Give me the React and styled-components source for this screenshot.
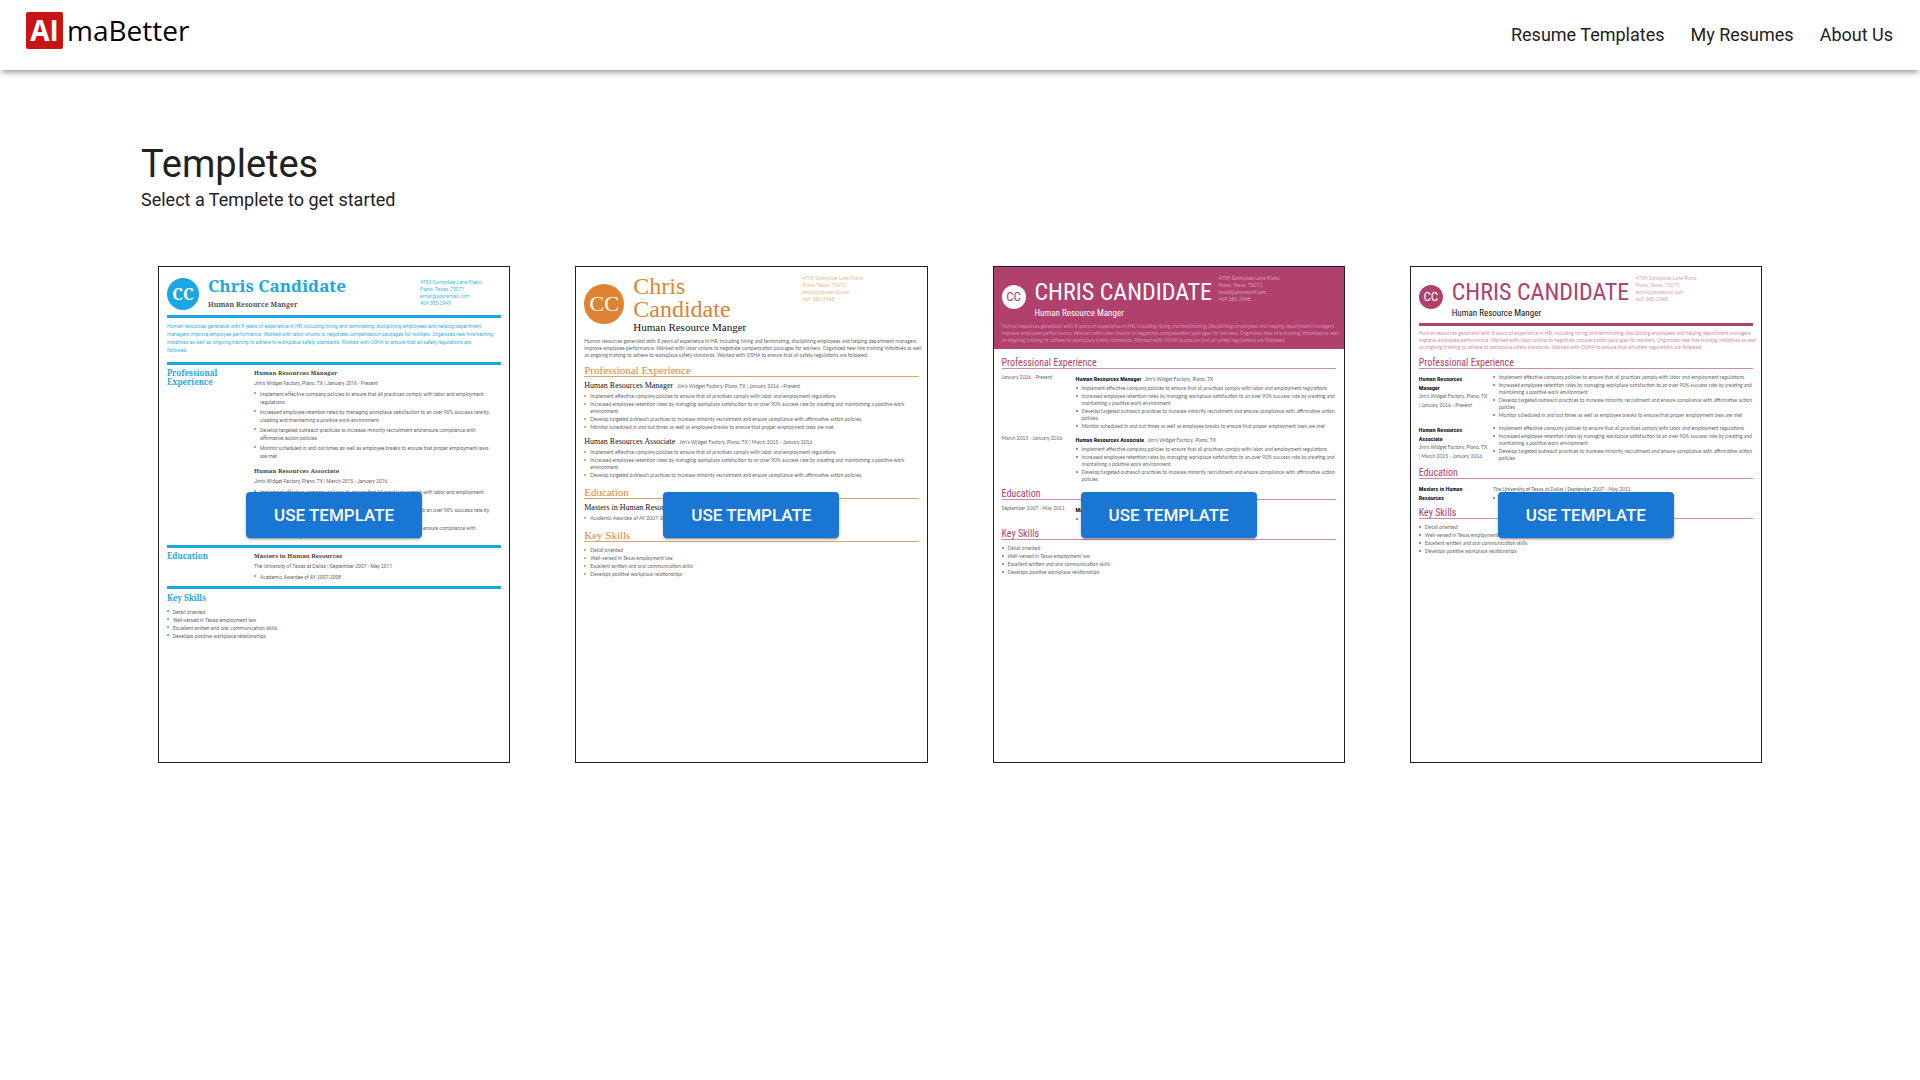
import React from "react";
import styled, { createGlobalStyle } from "styled-components";

const GlobalStyle = createGlobalStyle`
  * { box-sizing: border-box; }
  body { margin: 0; background: #fff; color: #212121; font-family: Roboto, sans-serif; }
  h1, h2, h3, h4, p, ul { margin: 0; padding: 0; font-weight: 400; }
`;

const serif = '"Noto Serif", "Liberation Serif", serif';
const baskerville = '"Liberation Serif", serif';
const narrow = '"Roboto Condensed", "Liberation Sans Narrow", Roboto, sans-serif';

const TopBar = styled.header`
  display: flex;
  justify-content: space-between;
  align-items: center;
  height: 70px;
  padding: 0 27px 0 26px;
  box-shadow: 0 4px 6px -2px rgba(0, 0, 0, 0.45);
`;

const Logo = styled.a`
  display: flex;
  align-items: center;
  gap: 4px;
  padding-bottom: 9px;
  color: #000;
  font: 400 28px/37px "Open Sans", sans-serif;
  text-decoration: none;
`;

const LogoMark = styled.span`
  width: 37px;
  height: 37px;
  border-radius: 2px;
  background: #c91416;
  color: #fff;
  font-weight: 700;
  text-align: center;
`;

const Nav = styled.nav`
  display: flex;
  gap: 26px;
`;

const NavLink = styled.a`
  color: #212121;
  font-size: 18px;
  line-height: 24px;
  text-decoration: none;
`;

const Page = styled.main`
  padding: 70px 141px;
`;

const Title = styled.h1`
  font-size: 38px;
  line-height: 48px;
`;

const Subtitle = styled.p`
  font-size: 18px;
  line-height: 24px;
`;

const Gallery = styled.section`
  display: grid;
  grid-template-columns: repeat(4, 1fr);
  gap: 65px;
  padding: 54px 17px 0;
`;

const Card = styled.article`
  position: relative;
  aspect-ratio: 352 / 497;
  overflow: hidden;
  border: 1px solid #212121;
`;

const UseButton = styled.button`
  position: absolute;
  top: 50%;
  left: 50%;
  transform: translate(-50%, -50%);
  width: 176px;
  height: 46px;
  border: 0;
  border-radius: 4px;
  background: #1976d2;
  color: #fff;
  font: 500 17px/24px Roboto, sans-serif;
  text-transform: uppercase;
  white-space: nowrap;
  cursor: pointer;
  box-shadow: 0 3px 1px -2px rgba(0, 0, 0, 0.2), 0 2px 2px 0 rgba(0, 0, 0, 0.14),
    0 1px 5px 0 rgba(0, 0, 0, 0.12);
`;

/* ---- resume previews ---- */

const Sheet = styled.div`
  padding: 8px;
  color: #666;
  font: 400 5px/7px ${(p) => p.$font || "Lato, sans-serif"};
  white-space: nowrap;
`;

const Band = styled.div`
  margin: -8px -8px 9px;
  padding: 8px 8px 5px;
  background: ${(p) => p.$color};
`;

const Head = styled.div`
  display: flex;
`;

const Avatar = styled.div`
  display: grid;
  place-items: center;
  align-self: center;
  width: ${(p) => p.$size}px;
  height: ${(p) => p.$size}px;
  border-radius: 50%;
  background: ${(p) => p.$bg};
  color: ${(p) => p.$fg};
  font: ${(p) => p.$type};
`;

const Who = styled.div`
  display: flex;
  flex-direction: column;
  width: ${(p) => p.$width}px;
  margin-left: 9px;
`;

const Name = styled.h2`
  color: ${(p) => p.$color};
  font: ${(p) => p.$type};
`;

const Role = styled.h3`
  color: ${(p) => p.$color};
  font: ${(p) => p.$type};
`;

const Contact = styled.address`
  padding-top: ${(p) => p.$top || 0}px;
  color: ${(p) => p.$color};
  font-style: normal;
`;

const Line = styled.span`
  display: block;
`;

const Rule = styled.hr`
  height: 3px;
  margin: ${(p) => p.$top}px 0 0;
  border: 0;
  background: ${(p) => p.$color};
`;

const Summary = styled.p`
  margin-top: ${(p) => p.$top}px;
  color: ${(p) => p.$color};
  line-height: ${(p) => p.$line || 7}px;
`;

const Heading = styled.h3`
  margin: ${(p) => p.$top}px 0 ${(p) => p.$bottom}px;
  border-bottom: 1px solid ${(p) => p.$line};
  color: ${(p) => p.$color};
  font: ${(p) => p.$type};
`;

const SideHeading = styled.h3`
  color: ${(p) => p.$color};
  font: 700 8px/9px ${serif};
`;

const Columns = styled.div`
  display: grid;
  grid-template-columns: ${(p) => p.$side}px 1fr;
  margin-top: ${(p) => p.$top || 0}px;
`;

const Job = styled.h4`
  margin-top: ${(p) => p.$top || 0}px;
  color: ${(p) => p.$color || "#111"};
  font: ${(p) => p.$type};
`;

const Place = styled.span`
  margin-left: 2px;
  color: #666;
  font: 400 5px/7px Lato, sans-serif;
`;

const Detail = styled.p`
  line-height: ${(p) => p.$line || 10}px;
`;

const List = styled.ul`
  display: grid;
  gap: ${(p) => p.$gap ?? 1}px;
  margin-top: ${(p) => p.$top || 0}px;
  line-height: ${(p) => p.$line || 7}px;
  list-style: none;
`;

const Item = styled.li`
  display: grid;
  grid-template-columns: 6px 1fr;

  &::before {
    content: "";
    width: 2px;
    height: 2px;
    margin-top: 2px;
    background: ${(p) => p.$color};
    opacity: 0.7;
  }
`;

const Lines = ({ of }) => of.map((text) => <Line key={text}>{text}</Line>);

const Bullets = ({ items, color, ...rest }) => (
  <List {...rest}>
    {items.map((lines) => (
      <Item key={lines[0]} $color={color}>
        <div><Lines of={lines} /></div>
      </Item>
    ))}
  </List>
);

const contact = ["4759 Sunnydale Lane Plano", "Plano, Texas, 75071", "email@youremail.com", "469 385-2948"];

const skills = [
  ["Detail oriented"],
  ["Well-versed in Texas employment law"],
  ["Excellent written and oral communication skills"],
  ["Develops positive workplace relationships"],
];

const summary = [
  "Human resources generalist with 8 years of experience in HR, including hiring and terminating, disciplining employees and helping department managers",
  "improve employee performance. Worked with labor unions to negotiate compensation packages for workers. Organized new hire training initiatives as well",
  "as ongoing training to adhere to workplace safety standards. Worked with OSHA to ensure that all safety regulations are followed.",
];

const summaryWide = [
  "Human resources generalist with 8 years of experience in HR, including hiring and terminating, disciplining employees and helping department",
  "managers improve employee performance. Worked with labor unions to negotiate compensation packages for workers. Organized new hire training",
  "initiatives as well as ongoing training to adhere to workplace safety standards. Worked with OSHA to ensure that all safety regulations are",
  "followed.",
];

const dutiesBlue = [
  ["Implement effective company policies to ensure that all practices comply with labor and employment", "regulations"],
  ["Increased employee retention rates by managing workplace satisfaction to an over 90% success rate by", "creating and maintaining a positive work environment"],
  ["Develop targeted outreach practices to increase minority recruitment and ensure compliance with", "affirmative action policies"],
  ["Monitor scheduled in and out times as well as employee breaks to ensure that proper employment laws", "are met"],
];

const dutiesOrange = [
  ["Implement effective company policies to ensure that all practices comply with labor and employment regulations"],
  ["Increased employee retention rates by managing workplace satisfaction to an over 90% success rate by creating and maintaining a positive work", "environment"],
  ["Develop targeted outreach practices to increase minority recruitment and ensure compliance with affirmative action policies"],
  ["Monitor scheduled in and out times as well as employee breaks to ensure that proper employment laws are met"],
];

const dutiesPink = [
  ["Implement effective company policies to ensure that all practices comply with labor and employment regulations"],
  ["Increased employee retention rates by managing workplace satisfaction to an over 90% success rate by creating and", "maintaining a positive work environment"],
  ["Develop targeted outreach practices to increase minority recruitment and ensure compliance with affirmative action", "policies"],
  ["Monitor scheduled in and out times as well as employee breaks to ensure that proper employment laws are met"],
];

const award = [["Academic Awardee of AY 2007-2008"]];

const BLUE = "#1ba8e2";
const ORANGE = "#dd8333";
const PINK = "#b0406c";

function BlueResume() {
  const job = `700 6px/10px ${serif}`;
  return (
    <Sheet $font="Roboto, sans-serif">
      <Head>
        <Avatar $size={32} $bg={BLUE} $fg="#fff" $type={`700 16px/20px ${serif}`}>CC</Avatar>
        <Who $width={212}>
          <Name $color={BLUE} $type={`700 17px/22px ${serif}`}>Chris Candidate</Name>
          <Role $color="#555" $type={`700 7px/16px ${serif}`}>Human Resource Manger</Role>
        </Who>
        <Contact $top={4} $color="#45b6e6"><Lines of={contact} /></Contact>
      </Head>
      <Rule $top={2} $color={BLUE} />
      <Summary $top={4} $line={8} $color="#35b0e4"><Lines of={summaryWide} /></Summary>
      <Rule $top={8} $color={BLUE} />
      <Columns $side={87} $top={3}>
        <SideHeading $color={BLUE}>Professional<br />Experience</SideHeading>
        <div>
          <Job $color="#444" $type={job}>Human Resources Manager</Job>
          <Detail>Jim's Widget Factory, Plano, TX | January 2016 - Present</Detail>
          <Bullets items={dutiesBlue} color={BLUE} $gap={2} $line={8} $top={2} />
          <Job $top={6} $color="#444" $type={job}>Human Resources Associate</Job>
          <Detail>Jim's Widget Factory, Plano, TX | March 2015 - January 2016</Detail>
          <Bullets items={dutiesBlue.slice(0, 3)} color={BLUE} $gap={2} $line={8} $top={2} />
        </div>
      </Columns>
      <Rule $top={5} $color={BLUE} />
      <Columns $side={87} $top={3}>
        <SideHeading $color={BLUE}>Education</SideHeading>
        <div>
          <Job $color="#444" $type={job}>Masters in Human Resources</Job>
          <Detail>The University of Texas at Dallas | September 2007 - May 2011</Detail>
          <Bullets items={award} color={BLUE} $line={8} $top={2} />
        </div>
      </Columns>
      <Rule $top={5} $color={BLUE} />
      <Columns $side={87} $top={4}>
        <SideHeading $color={BLUE}>Key Skills</SideHeading>
      </Columns>
      <Bullets items={skills} color={BLUE} $gap={0} $line={8} $top={6} />
    </Sheet>
  );
}

function OrangeResume() {
  const heading = { $color: ORANGE, $line: "#e2a36a", $type: `400 11px/12px ${baskerville}` };
  const job = `400 8px/10px ${baskerville}`;
  return (
    <Sheet>
      <Head>
        <Avatar $size={40} $bg={ORANGE} $fg="#fff" $type={`400 22px/24px ${baskerville}`}>CC</Avatar>
        <Who $width={169}>
          <Name $color={ORANGE} $type={`400 24px/23px ${baskerville}`}>Chris<br />Candidate</Name>
          <Role $color="#111" $type={`400 11px/12px ${baskerville}`}>Human Resource Manger</Role>
        </Who>
        <Contact $color="#eab88a"><Lines of={contact} /></Contact>
      </Head>
      <Summary $top={5} $color="#666"><Lines of={summary} /></Summary>
      <Heading {...heading} $top={5} $bottom={4}>Professional Experience</Heading>
      <Job $type={job}>Human Resources Manager <Place>Jim's Widget Factory, Plano, TX | January 2016 - Present</Place></Job>
      <Bullets items={dutiesOrange} color={ORANGE} $top={2} />
      <Job $top={6} $type={job}>Human Resources Associate <Place>Jim's Widget Factory, Plano, TX | March 2015 - January 2016</Place></Job>
      <Bullets items={dutiesOrange.slice(0, 3)} color={ORANGE} $top={2} />
      <Heading {...heading} $top={7} $bottom={4}>Education</Heading>
      <Job $type={job}>Masters in Human Resources</Job>
      <Bullets items={award} color={ORANGE} $top={2} />
      <Heading {...heading} $top={7} $bottom={5}>Key Skills</Heading>
      <Bullets items={skills} color={ORANGE} />
    </Sheet>
  );
}

const pinkHeading = { $color: PINK, $line: "#d08ba6", $bottom: 5, $type: `400 10px/10px ${narrow}` };

const PinkHead = ({ ink, disc, initials, role, contactColor }) => (
  <Head>
    <Avatar $size={24} $bg={disc} $fg={initials} $type={`400 13px/14px ${narrow}`}>CC</Avatar>
    <Who $width={184}>
      <Name $color={ink} $type={`400 24px/34px ${narrow}`}>CHRIS CANDIDATE</Name>
      <Role $color={role} $type={`400 9px/9px ${narrow}`}>Human Resource Manger</Role>
    </Who>
    <Contact $color={contactColor}><Lines of={contact} /></Contact>
  </Head>
);

function BannerResume() {
  const job = `700 6px/10px ${narrow}`;
  return (
    <Sheet>
      <Band $color={PINK}>
        <PinkHead ink="#fff" disc="#fff" initials={PINK} role="#fff" contactColor="#d9a0b7" />
        <Summary $top={5} $color="#d493ae"><Lines of={summary} /></Summary>
      </Band>
      <Heading {...pinkHeading} $top={9}>Professional Experience</Heading>
      <Columns $side={74}>
        <Detail $line={7}>January 2016 - Present</Detail>
        <div>
          <Job $type={job}>Human Resources Manager <Place>Jim's Widget Factory, Plano, TX</Place></Job>
          <Bullets items={dutiesPink} color={PINK} $top={1} />
        </div>
      </Columns>
      <Columns $side={74} $top={5}>
        <Detail $line={7}>March 2015 - January 2016</Detail>
        <div>
          <Job $type={job}>Human Resources Associate <Place>Jim's Widget Factory, Plano, TX</Place></Job>
          <Bullets items={dutiesPink.slice(0, 3)} color={PINK} $top={1} />
        </div>
      </Columns>
      <Heading {...pinkHeading} $top={6}>Education</Heading>
      <Columns $side={74}>
        <Detail $line={7}>September 2007 - May 2011</Detail>
        <div>
          <Job $type={job}>Masters in Human Resources</Job>
          <Bullets items={award} color={PINK} $top={1} />
        </div>
      </Columns>
      <Heading {...pinkHeading} $top={6}>Key Skills</Heading>
      <Bullets items={skills} color={PINK} />
    </Sheet>
  );
}

function PinkResume() {
  const job = `700 6px/9px ${narrow}`;
  return (
    <Sheet>
      <PinkHead ink={PINK} disc={PINK} initials="#fff" role="#111" contactColor="#d8a0b6" />
      <Rule $top={5} $color={PINK} />
      <Summary $top={4} $color="#cf8ca8"><Lines of={summary} /></Summary>
      <Heading {...pinkHeading} $top={7}>Professional Experience</Heading>
      <Columns $side={74}>
        <div>
          <Job $type={job}>Human Resources<br />Manager</Job>
          <Detail $line={9}>Jim's Widget Factory, Plano, TX<br />| January 2016 - Present</Detail>
        </div>
        <Bullets items={dutiesPink} color={PINK} />
      </Columns>
      <Columns $side={74} $top={6}>
        <div>
          <Job $type={job}>Human Resources<br />Associate</Job>
          <Detail $line={9}>Jim's Widget Factory, Plano, TX<br />| March 2015 - January 2016</Detail>
        </div>
        <Bullets items={dutiesPink.slice(0, 3)} color={PINK} />
      </Columns>
      <Heading {...pinkHeading} $top={6}>Education</Heading>
      <Columns $side={74}>
        <Job $type={job}>Masters in Human<br />Resources</Job>
        <div>
          <Detail>The University of Texas at Dallas | September 2007 - May 2011</Detail>
          <Bullets items={award} color={PINK} $top={1} />
        </div>
      </Columns>
      <Heading {...pinkHeading} $top={6}>Key Skills</Heading>
      <Bullets items={skills} color={PINK} />
    </Sheet>
  );
}

const templates = [BlueResume, OrangeResume, BannerResume, PinkResume];

export default function App() {
  return (
    <>
      <GlobalStyle />
      <TopBar>
        <Logo href="#"><LogoMark>AI</LogoMark>maBetter</Logo>
        <Nav>
          <NavLink href="#">Resume Templates</NavLink>
          <NavLink href="#">My Resumes</NavLink>
          <NavLink href="#">About Us</NavLink>
        </Nav>
      </TopBar>
      <Page>
        <Title>Templetes</Title>
        <Subtitle>Select a Templete to get started</Subtitle>
        <Gallery>
          {templates.map((Preview) => (
            <Card key={Preview.name}>
              <Preview />
              <UseButton type="button">Use Template</UseButton>
            </Card>
          ))}
        </Gallery>
      </Page>
    </>
  );
}
